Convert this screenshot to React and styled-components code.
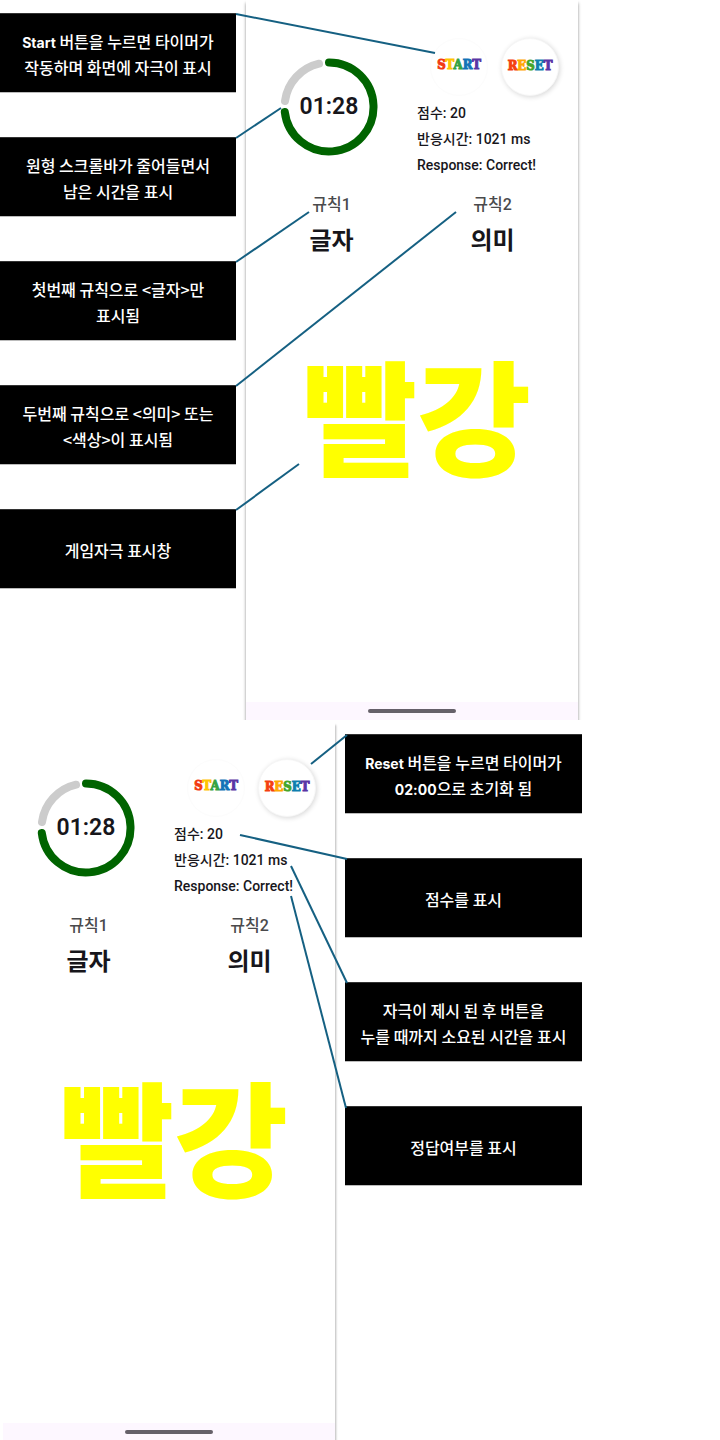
import React from "react";
import styled, { createGlobalStyle } from "styled-components";

const GlobalStyle = createGlobalStyle`
  *, *::before, *::after { box-sizing: border-box; }
  body {
    margin: 0;
    background: #fff;
    font-family: Roboto, "Noto Sans CJK KR", sans-serif;
    color: #17161b;
  }
  p, ul, dl, dd { margin: 0; padding: 0; }
`;

const Page = styled.main`
  display: grid;
  grid-template-rows: minmax(720px, auto) 1fr;
  row-gap: 1px;
  min-height: 100vh;
`;

const Figure = styled.section`
  position: relative;
  display: grid;
  grid-template-columns: ${(p) => p.$columns};
  column-gap: 10px;
  padding-left: ${(p) => p.$inset || 0}px;
  overflow: hidden;
`;

const Leaders = styled.svg`
  position: absolute;
  top: 0;
  left: 0;
  width: 100%;
  height: 720px;
  pointer-events: none;

  line {
    stroke: #156082;
    stroke-width: 2px;
    vector-effect: non-scaling-stroke;
  }
`;

const Notes = styled.ul`
  display: flex;
  flex-direction: column;
  gap: 44px;
  padding-top: 13px;
  list-style: none;
`;

const Note = styled.li`
  display: flex;
  align-items: center;
  justify-content: center;
  min-height: 80px;
  padding-top: 2px;
  background: #000;
  border-top: 1px solid #333;
  border-bottom: 1px solid #bbb;
  color: #fff;
  font: 500 16px/26px "Noto Sans CJK KR", sans-serif;
  text-align: center;

  b {
    font: 700 14px/1 Inter, sans-serif;
  }
`;

const Phone = styled.article`
  display: flex;
  flex-direction: column;
  background: #fff;
  box-shadow: ${(p) =>
    p.$rightEdgeOnly ? "2px 3px 2px -1px rgba(0, 0, 0, 0.28)" : "0 3px 3px rgba(0, 0, 0, 0.45)"};
`;

const Screen = styled.div`
  display: flex;
  flex-direction: column;
  min-height: 702px;
  padding-top: 38px;
`;

const NavBar = styled.div`
  display: flex;
  flex: 1;
  align-items: center;
  justify-content: center;
  background: #fdf7ff;

  &::before {
    content: "";
    width: 88px;
    height: 4px;
    border-radius: 2px;
    background: #66616a;
  }
`;

const Top = styled.header`
  display: flex;
  gap: 39px;
  padding-left: 34px;
`;

const Timer = styled.div`
  display: grid;
  place-items: center;
  width: 98px;
  height: 98px;
  margin-top: 20px;

  > * { grid-area: 1 / 1; }
`;

const TimeText = styled.time`
  font-size: 23px;
  font-weight: 600;
  line-height: 28px;
`;

const Status = styled.div`
  display: flex;
  flex-direction: column;
  gap: 4px;
`;

const Actions = styled.div`
  display: flex;
  gap: 13px;
  padding-left: 13px;
`;

const RoundButton = styled.button`
  width: 58px;
  height: 58px;
  padding: 0 0 ${(p) => (p.$raised ? 2 : 4)}px;
  border: 1px solid ${(p) => (p.$raised ? "#f6f6f6" : "#fcfcfc")};
  border-radius: 50%;
  background: #fff;
  box-shadow: ${(p) => (p.$raised ? "1px 1px 5px rgba(0, 0, 0, 0.16)" : "none")};
  font: 700 13px/16px "DejaVu Serif Condensed", "DejaVu Serif", serif;
  white-space: nowrap;
`;

const Letter = styled.span`
  color: ${(p) => p.$color};
  -webkit-text-stroke: 1px ${(p) => p.$color};
`;

const Stats = styled.div`
  font-size: 14px;
  font-weight: 500;
  line-height: 26px;
`;

const Rules = styled.dl`
  display: grid;
  grid-template-columns: 1fr 1fr;
  padding: 15px 5px 0;
  text-align: center;
`;

const RuleName = styled.dt`
  margin-bottom: 6px;
  color: #4a4a4c;
  font-size: 16px;
  font-weight: 500;
  line-height: 24px;
`;

const RuleValue = styled.dd`
  font-size: 24px;
  font-weight: 700;
  line-height: 36px;
`;

const Stimulus = styled.p`
  padding: 61px 0 0 10px;
  color: #ff0;
  font: 900 124px/184px "Noto Sans CJK KR", sans-serif;
  text-align: center;
`;

const START = [["S", "#f23a12"], ["T", "#ffc400"], ["A", "#35a343"], ["R", "#1273b8"], ["T", "#5a35a5"]];
const RESET = [["R", "#f4400f"], ["E", "#ffa800"], ["S", "#46a52a"], ["E", "#0e7fb0"], ["T", "#5a35a5"]];

function Word({ letters }) {
  return letters.map(([char, color], i) => (
    <Letter key={i} $color={color}>{char}</Letter>
  ));
}

function GamePhone({ rightEdgeOnly }) {
  return (
    <Phone $rightEdgeOnly={rightEdgeOnly}>
      <Screen>
        <Top>
          <Timer>
            <svg width="98" height="98" viewBox="0 0 98 98" fill="none" strokeWidth="8" strokeLinecap="round" aria-hidden="true">
              <path d="M5 43 A44.5 44.5 0 0 1 39 5.7" stroke="#ccc" />
              <path d="M49 4.5 A44.5 44.5 0 1 1 4.8 54" stroke="#006400" />
            </svg>
            <TimeText>01:28</TimeText>
          </Timer>
          <Status>
            <Actions>
              <RoundButton type="button"><Word letters={START} /></RoundButton>
              <RoundButton type="button" $raised><Word letters={RESET} /></RoundButton>
            </Actions>
            <Stats>
              <p>점수: 20</p>
              <p>반응시간: 1021 ms</p>
              <p>Response: Correct!</p>
            </Stats>
          </Status>
        </Top>
        <Rules>
          <div>
            <RuleName>규칙1</RuleName>
            <RuleValue>글자</RuleValue>
          </div>
          <div>
            <RuleName>규칙2</RuleName>
            <RuleValue>의미</RuleValue>
          </div>
        </Rules>
        <Stimulus>빨강</Stimulus>
      </Screen>
      <NavBar />
    </Phone>
  );
}

function LeaderLines({ lines }) {
  return (
    <Leaders viewBox="0 0 720 720" preserveAspectRatio="none" aria-hidden="true">
      {lines.map(([x1, y1, x2, y2]) => (
        <line key={y1} x1={x1} y1={y1} x2={x2} y2={y2} />
      ))}
    </Leaders>
  );
}

const TOP_LINES = [
  [236, 14, 435, 53],
  [236, 138, 281, 108],
  [236, 262, 309, 212],
  [236, 386, 456, 212],
  [236, 510, 299, 464],
];

const BOTTOM_LINES = [
  [347, 14, 311, 43],
  [347, 138, 240, 114],
  [347, 262, 291, 145],
  [346, 387, 291, 175],
];

export default function App() {
  return (
    <>
      <GlobalStyle />
      <Page>
        <Figure $columns="236fr 332fr 132fr">
          <Notes>
            <Note><p><b>Start</b> 버튼을 누르면 타이머가<br />작동하며 화면에 자극이 표시</p></Note>
            <Note><p>원형 스크롤바가 줄어들면서<br />남은 시간을 표시</p></Note>
            <Note><p>첫번째 규칙으로 &lt;글자&gt;만<br />표시됨</p></Note>
            <Note><p>두번째 규칙으로 &lt;의미&gt; 또는<br />&lt;색상&gt;이 표시됨</p></Note>
            <Note><p>게임자극 표시창</p></Note>
          </Notes>
          <GamePhone />
          <LeaderLines lines={TOP_LINES} />
        </Figure>
        <Figure $columns="332fr 237fr 128fr" $inset={3}>
          <GamePhone rightEdgeOnly />
          <Notes>
            <Note><p><b>Reset</b> 버튼을 누르면 타이머가<br /><b>02:00</b>으로 초기화 됨</p></Note>
            <Note><p>점수를 표시</p></Note>
            <Note><p>자극이 제시 된 후 버튼을<br />누를 때까지 소요된 시간을 표시</p></Note>
            <Note><p>정답여부를 표시</p></Note>
          </Notes>
          <LeaderLines lines={BOTTOM_LINES} />
        </Figure>
      </Page>
    </>
  );
}
